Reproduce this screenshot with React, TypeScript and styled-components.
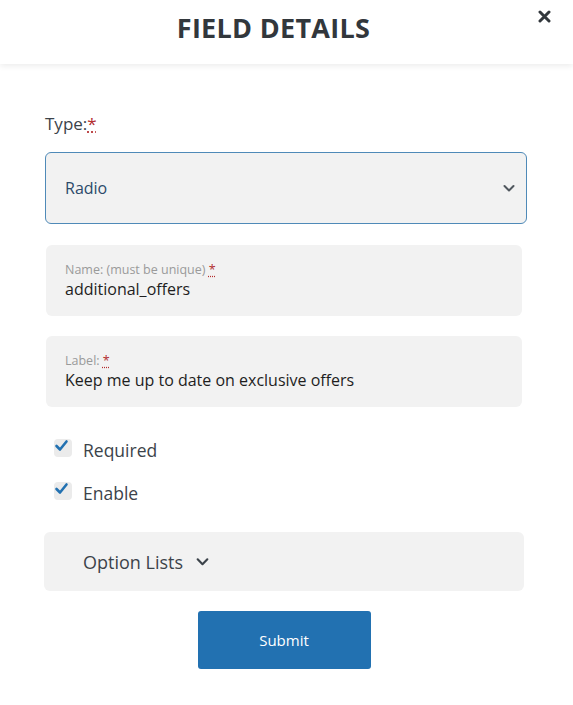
import React from "react";
import styled, { createGlobalStyle } from "styled-components";

const GlobalStyle = createGlobalStyle`
  html, body {
    margin: 0;
    padding: 0;
    background: #ffffff;
  }
  body {
    font-family: "Open Sans", "Noto Sans", sans-serif;
    color: #3c434a;
  }
`;

const Modal = styled.div`
  width: 573px;
  height: 705px;
  display: flex;
  flex-direction: column;
  background: #ffffff;
  overflow: hidden;
`;

const Header = styled.header`
  position: relative;
  height: 64px;
  display: flex;
  align-items: center;
  justify-content: center;
  box-shadow: 0 2px 6px rgba(0, 0, 0, 0.08);
  flex-shrink: 0;
`;

const Title = styled.h1`
  margin: 0 26px 10px 0;
  font-size: 27px;
  font-weight: 700;
  color: #32373c;
  letter-spacing: 0.3px;
`;

const CloseButton = styled.button`
  position: absolute;
  top: 8px;
  right: 21px;
  width: 16px;
  height: 16px;
  padding: 0;
  border: none;
  background: none;
  display: flex;
  align-items: center;
  justify-content: center;
  cursor: pointer;
`;

const Body = styled.div`
  display: flex;
  flex-direction: column;
  padding: 48px 46px 0 44px;
`;

const TypeLabel = styled.label`
  font-size: 17px;
  color: #3c434a;
  margin-left: 1px;
  margin-bottom: 17px;
`;

const Req = styled.abbr`
  color: #b32d2e;
  text-decoration: underline dotted;
  text-underline-offset: 2px;
  cursor: help;
`;

const SelectBox = styled.div`
  height: 72px;
  box-sizing: border-box;
  margin-left: 1px;
  display: flex;
  align-items: center;
  justify-content: space-between;
  padding: 0 10px 0 19px;
  background: #f2f2f2;
  border: 1.5px solid #4f8ab8;
  border-radius: 6px;
  font-size: 16px;
  color: #2c4a6a;
`;

const Field = styled.div`
  margin: 0 5px 0 2px;
  height: 71px;
  display: flex;
  flex-direction: column;
  justify-content: center;
  padding: 0 19px;
  background: #f2f2f2;
  border-radius: 6px;
`;

const FieldLabel = styled.span`
  font-size: 12.5px;
  color: #9a9a9a;
  line-height: 17px;
`;

const FieldValue = styled.span`
  font-size: 16px;
  color: #1e1e1e;
  line-height: 23px;
`;

const Fields = styled.div`
  display: flex;
  flex-direction: column;
  gap: 20px;
  margin-top: 21px;
`;

const Checks = styled.div`
  display: flex;
  flex-direction: column;
  gap: 18px;
  margin: 31px 0 0 10px;
`;

const CheckRow = styled.label`
  display: flex;
  align-items: center;
  gap: 11px;
  font-size: 17.5px;
  color: #3c434a;
  line-height: 25px;
`;

const CheckBox = styled.span`
  width: 18px;
  height: 18px;
  border-radius: 4px;
  background: #ebebeb;
  display: flex;
  align-items: flex-start;
  justify-content: flex-start;
  margin-top: -6px;
`;

const OptionPanel = styled.div`
  margin: 26px 3px 0 0;
  height: 59px;
  display: flex;
  align-items: center;
  gap: 12px;
  padding: 0 39px;
  background: #f2f2f2;
  border-radius: 6px;
  font-size: 18px;
  color: #3c434a;
`;

const Actions = styled.div`
  display: flex;
  justify-content: center;
  margin-top: 20px;
  padding-right: 3px;
`;

const SubmitButton = styled.button`
  width: 173px;
  height: 58px;
  background: #2271b1;
  color: #ffffff;
  border: none;
  border-radius: 3px;
  font-family: inherit;
  font-size: 15px;
  cursor: pointer;
`;

const Chevron = ({ size = 14, color = "#50575e" }: { size?: number; color?: string }) => (
  <svg width={size} height={size} viewBox="0 0 14 14" fill="none">
    <path d="M2.5 5 L7 9.5 L11.5 5" stroke={color} strokeWidth="2" strokeLinecap="round" strokeLinejoin="round" />
  </svg>
);

const Tick = () => (
  <svg width="18" height="16" viewBox="0 0 18 16" fill="none">
    <path d="M2.5 7 L6 10.5 L12.5 2.5" stroke="#2271b1" strokeWidth="2.6" strokeLinecap="round" strokeLinejoin="round" />
  </svg>
);

const Check = ({ label }: { label: string }) => (
  <CheckRow>
    <CheckBox>
      <Tick />
    </CheckBox>
    {label}
  </CheckRow>
);

export default function App() {
  return (
    <Modal>
      <GlobalStyle />
      <Header>
        <Title>FIELD DETAILS</Title>
        <CloseButton aria-label="Close">
          <svg width="13" height="13" viewBox="0 0 13 13">
            <path d="M2 2 L11 11 M11 2 L2 11" stroke="#32373c" strokeWidth="3" strokeLinecap="round" />
          </svg>
        </CloseButton>
      </Header>
      <Body>
        <TypeLabel>
          Type:<Req title="required">*</Req>
        </TypeLabel>
        <SelectBox>
          Radio
          <Chevron />
        </SelectBox>
        <Fields>
          <Field>
            <FieldLabel>
              Name: (must be unique) <Req title="required">*</Req>
            </FieldLabel>
            <FieldValue>additional_offers</FieldValue>
          </Field>
          <Field>
            <FieldLabel>
              Label: <Req title="required">*</Req>
            </FieldLabel>
            <FieldValue>Keep me up to date on exclusive offers</FieldValue>
          </Field>
        </Fields>
        <Checks>
          <Check label="Required" />
          <Check label="Enable" />
        </Checks>
        <OptionPanel>
          Option Lists
          <Chevron size={15} color="#3c434a" />
        </OptionPanel>
        <Actions>
          <SubmitButton>Submit</SubmitButton>
        </Actions>
      </Body>
    </Modal>
  );
}
